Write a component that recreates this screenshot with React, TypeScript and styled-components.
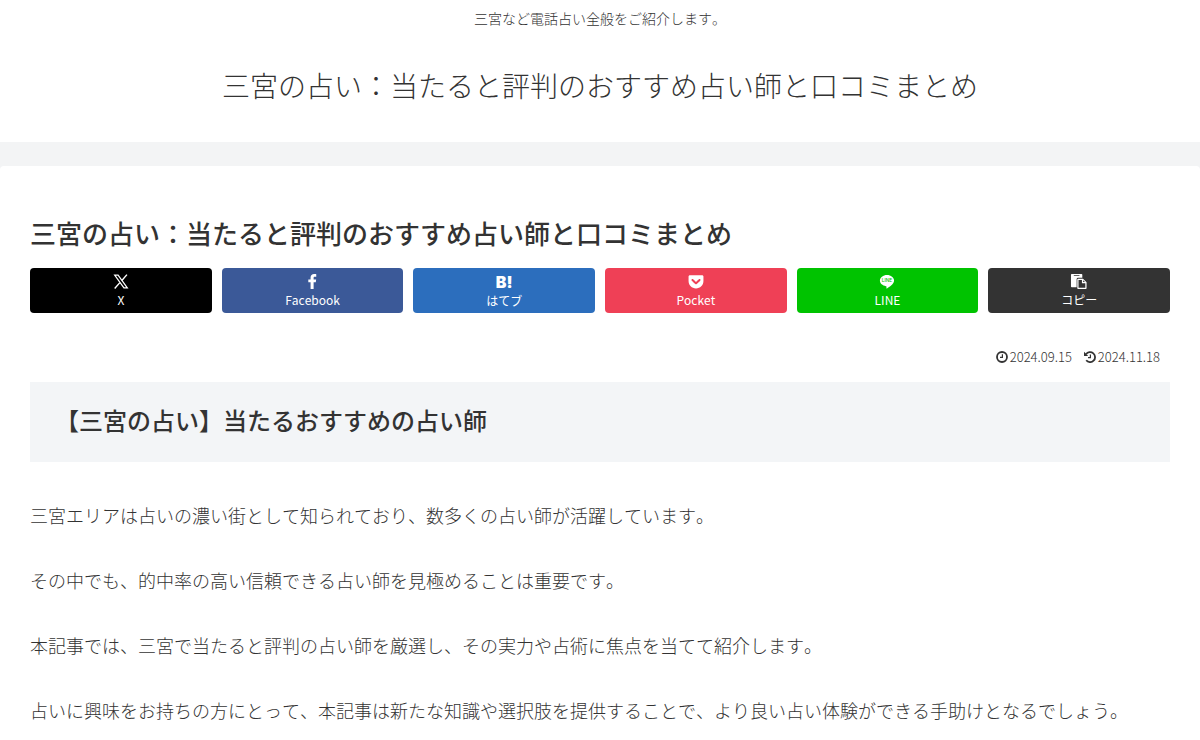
import React from 'react';
import styled, { createGlobalStyle } from 'styled-components';
import { FaGetPocket } from 'react-icons/fa';

const GlobalStyle = createGlobalStyle`
  * { box-sizing: border-box; }
  body {
    margin: 0;
    background: #f3f4f5;
    color: #333;
    font-family: "Noto Sans CJK JP", "Noto Sans", sans-serif;
    font-size: 18px;
    font-weight: 300;
    font-kerning: none;
    line-height: 32px;
    overflow-x: hidden;
  }
`;

const Header = styled.header`
  display: flex;
  flex-direction: column;
  align-items: center;
  gap: 32px;
  padding: 7px 10px 33px;
  background: #fff;
  text-align: center;
`;

const Tagline = styled.p`
  margin: 0;
  font-size: 14px;
  line-height: 22px;
`;

const SiteName = styled.a`
  color: #333;
  font-size: 28px;
  line-height: 48px;
  text-decoration: none;
`;

const Main = styled.main`
  margin-top: 24px;
  padding: 49px 30px 14px;
  background: #fff;
  border-radius: 4px 4px 0 0;
`;

const Title = styled.h1`
  margin: 0 0 17px;
  font-size: 26px;
  font-weight: 500;
  line-height: 36px;
`;

const ShareList = styled.div`
  display: grid;
  grid-template-columns: repeat(6, 1fr);
  gap: 10px;
`;

const ShareLink = styled.a<{ $color: string }>`
  display: flex;
  flex-direction: column;
  align-items: center;
  gap: 2px;
  height: 45px;
  padding: 5px 0;
  border: 0;
  border-radius: 4px;
  background: ${(p) => p.$color};
  color: #fff;
  font-family: inherit;
  font-size: 12px;
  font-weight: 400;
  line-height: 16px;
  text-decoration: none;
  cursor: pointer;

  svg {
    display: block;
    width: 18px;
    height: 18px;
  }
`;

const Dates = styled.div`
  display: flex;
  justify-content: flex-end;
  gap: 12px;
  margin-top: 32px;
  padding: 0 10px;
  font-size: 13px;
  line-height: 24px;
`;

const DateItem = styled.span`
  display: flex;
  align-items: center;
  gap: 2px;

  svg {
    width: 12px;
    height: 12px;
  }
`;

const Heading = styled.h2`
  margin: 13px 0 37px;
  padding: 22px 25px 26px;
  background: #f3f5f7;
  font-size: 24px;
  font-weight: 500;
  line-height: 32px;
`;

const Paragraph = styled.p`
  margin: 0 0 33px;

  &:last-child {
    margin-bottom: 0;
  }
`;

const HatenaMark = styled.span`
  height: 18px;
  font-family: Inter, sans-serif;
  font-size: 16px;
  font-weight: 900;
  line-height: 19px;
`;

const XIcon = () => (
  <svg viewBox="0 0 18 18" aria-hidden="true">
    <path fill="none" stroke="currentColor" strokeWidth="1.300" d="M2.300 2.200h3.600l9.800 13.600h-3.600z" />
    <path fill="none" stroke="currentColor" strokeWidth="1.500" d="M15.300 1.700 9.900 7.900M7.800 10.200 2.300 16.400" />
  </svg>
);

const FacebookIcon = () => (
  <svg viewBox="0 0 18 18" aria-hidden="true">
    <path fill="currentColor" d="M13.500 1.200v2.700H12c-1.100 0-1.300.6-1.300 1.300v1.700h2.700l-.4 2.900h-2.300V17H7.500V9.800H5.100V6.900h2.400V4.800c0-2.400 1.500-3.700 3.700-3.700 1 0 2 .1 2.300.1z" />
  </svg>
);

const LineIcon = () => (
  <svg viewBox="0 0 18 18" aria-hidden="true">
    <path fill="currentColor" d="M9 2C4.900 2 1.500 4.600 1.500 8c0 3 2.700 5.400 6.400 5.900.6.100.7.400.6.900l-.2 1.200c0 .5.200.6.700.3 2.500-1.400 7.500-4.600 7.500-8.300C16.500 4.600 13.100 2 9 2z" />
    <text x="9" y="10" textAnchor="middle" fill="#00c300" fontFamily="Inter, sans-serif" fontWeight="500" fontSize="5">LINE</text>
  </svg>
);

const CopyIcon = () => (
  <svg viewBox="0 0 18 18" aria-hidden="true">
    <path fill="currentColor" fillRule="evenodd" d="M1.300 1h10.400a.8.800 0 0 1 .8.800V5H8a1.500 1.500 0 0 0-1.500 1.500V15H1.300a.8.800 0 0 1-.8-.8V1.800A.8.800 0 0 1 1.300 1zM3.500 2v1h6V2z" />
    <path fill="currentColor" fillRule="evenodd" d="M8 6h5.200L17 9.800v6.400a.8.800 0 0 1-.8.800H8a.8.800 0 0 1-.8-.8V6.800A.8.800 0 0 1 8 6zM8.500 7.300v8.400h7.200v-4.900h-3.600V7.300zM13.400 7.700v1.900h1.900z" />
  </svg>
);

const ClockIcon = () => (
  <svg viewBox="0 0 12 12" fill="none" stroke="currentColor" aria-hidden="true">
    <circle cx="6" cy="6" r="5" strokeWidth="1.800" />
    <path d="M6.400 3.200v3.200H4" strokeWidth="1.200" />
  </svg>
);

const HistoryIcon = () => (
  <svg viewBox="0 0 12 12" fill="none" stroke="currentColor" aria-hidden="true">
    <path d="M2 3.200A5 5 0 1 1 2.200 9.300" strokeWidth="1.800" />
    <path d="M0 .8v4.200h4.200z" fill="currentColor" stroke="none" />
    <path d="M6.400 3.400v3.200H4" strokeWidth="1.200" />
  </svg>
);

const paragraphs = [
  '三宮エリアは占いの濃い街として知られており、数多くの占い師が活躍しています。',
  'その中でも、的中率の高い信頼できる占い師を見極めることは重要です。',
  '本記事では、三宮で当たると評判の占い師を厳選し、その実力や占術に焦点を当てて紹介します。',
  '占いに興味をお持ちの方にとって、本記事は新たな知識や選択肢を提供することで、より良い占い体験ができる手助けとなるでしょう。',
];

export default function App() {
  return (
    <>
      <GlobalStyle />
      <Header>
        <Tagline>三宮など電話占い全般をご紹介します。</Tagline>
        <SiteName href="#">三宮の占い：当たると評判のおすすめ占い師と口コミまとめ</SiteName>
      </Header>
      <Main>
        <article lang="ja">
          <Title>三宮の占い：当たると評判のおすすめ占い師と口コミまとめ</Title>
          <ShareList>
            <ShareLink href="#" $color="#000"><XIcon />X</ShareLink>
            <ShareLink href="#" $color="#3b5998"><FacebookIcon />Facebook</ShareLink>
            <ShareLink href="#" $color="#2c6ebd"><HatenaMark aria-hidden="true">B!</HatenaMark>はてブ</ShareLink>
            <ShareLink href="#" $color="#ef4056"><FaGetPocket />Pocket</ShareLink>
            <ShareLink href="#" $color="#00c300"><LineIcon />LINE</ShareLink>
            <ShareLink as="button" type="button" $color="#333"><CopyIcon />コピー</ShareLink>
          </ShareList>
          <Dates>
            <DateItem><ClockIcon /><time dateTime="2024-09-15">2024.09.15</time></DateItem>
            <DateItem><HistoryIcon /><time dateTime="2024-11-18">2024.11.18</time></DateItem>
          </Dates>
          <Heading>【三宮の占い】当たるおすすめの占い師</Heading>
          {paragraphs.map((text) => (
            <Paragraph key={text}>{text}</Paragraph>
          ))}
        </article>
      </Main>
    </>
  );
}
